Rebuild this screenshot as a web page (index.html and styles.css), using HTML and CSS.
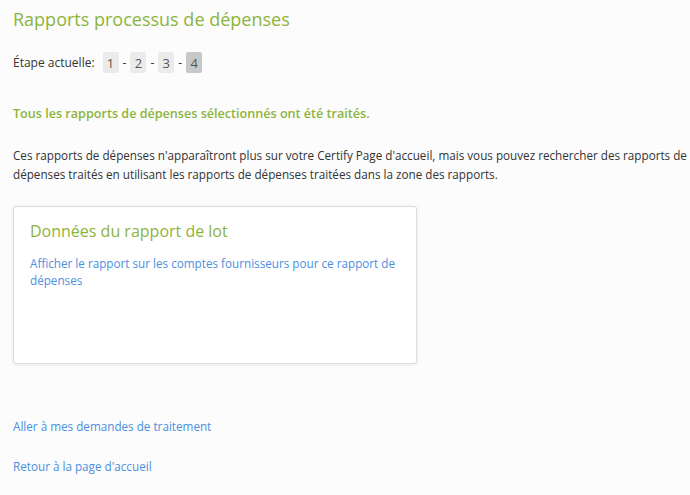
FILE: index.html
```html
<!DOCTYPE html>
<html lang="fr">
<head>
  <meta charset="UTF-8">
  <title>Rapports processus de dépenses</title>
  <link rel="stylesheet" href="styles.css">
</head>
<body>
  <div class="page">
    <h1 class="page-title">Rapports processus de dépenses</h1>

    <div class="steps">
      <span class="steps-label">Étape actuelle:</span>
      <span class="step">1</span>
      <span class="step-sep">-</span>
      <span class="step">2</span>
      <span class="step-sep">-</span>
      <span class="step">3</span>
      <span class="step-sep">-</span>
      <span class="step current">4</span>
    </div>

    <p class="done-msg">Tous les rapports de dépenses sélectionnés ont été traités.</p>

    <p class="info">Ces rapports de dépenses n'apparaîtront plus sur votre Certify Page d'accueil, mais vous pouvez rechercher des rapports de dépenses traités en utilisant les rapports de dépenses traitées dans la zone des rapports.</p>

    <div class="card">
      <h2 class="card-title">Données du rapport de lot</h2>
      <a class="link" href="#">Afficher le rapport sur les comptes fournisseurs pour ce rapport de dépenses</a>
    </div>

    <div class="bottom-links">
      <a class="link" href="#">Aller à mes demandes de traitement</a>
      <a class="link" href="#">Retour à la page d'accueil</a>
    </div>
  </div>
</body>
</html>
```

FILE: styles.css
```css
body {
  margin: 0;
  background: #fcfcfc;
  font-family: "Open Sans", "Segoe UI", Arial, sans-serif;
  font-size: 11.7px;
  color: #333;
  overflow: hidden;
}

.page {
  padding: 6px 0 0 13px;
  width: 682px;
}

.page-title {
  margin: 0;
  font-size: 18px;
  font-weight: normal;
  color: #8cb43c;
  line-height: 26px;
}

.steps {
  display: flex;
  align-items: center;
  margin-top: 20px;
  height: 21px;
  font-size: 12px;
}

.steps-label {
  margin-right: 8px;
}

.step {
  display: inline-flex;
  align-items: center;
  justify-content: center;
  min-width: 16px;
  height: 21px;
  background: #ebebeb;
  border-radius: 2px;
  color: #555;
  font-size: 13px;
}

.step.current {
  background: #c8c8c8;
}

.step-sep {
  padding: 0 4px;
}

.done-msg {
  margin: 32px 0 0;
  color: #8cb43c;
  font-weight: 600;
  font-size: 12.6px;
  line-height: 18px;
}

.info {
  margin: 23px 0 0;
  line-height: 19px;
}

.card {
  width: 370px;
  height: 127px;
  margin-top: 22px;
  padding: 12px 16px 17px;
  background: #fff;
  border: 1px solid #dcdcdc;
  border-radius: 3px;
  box-shadow: 0 1px 4px rgba(0, 0, 0, 0.08);
}

.card-title {
  margin: 0 0 12px;
  font-size: 16px;
  font-weight: normal;
  color: #8cb43c;
  line-height: 24px;
}

.link {
  color: #4a8fe0;
  text-decoration: none;
  line-height: 18px;
}

.card .link {
  line-height: 17px;
}

.bottom-links {
  display: flex;
  flex-direction: column;
  gap: 22px;
  margin-top: 53px;
}
```
